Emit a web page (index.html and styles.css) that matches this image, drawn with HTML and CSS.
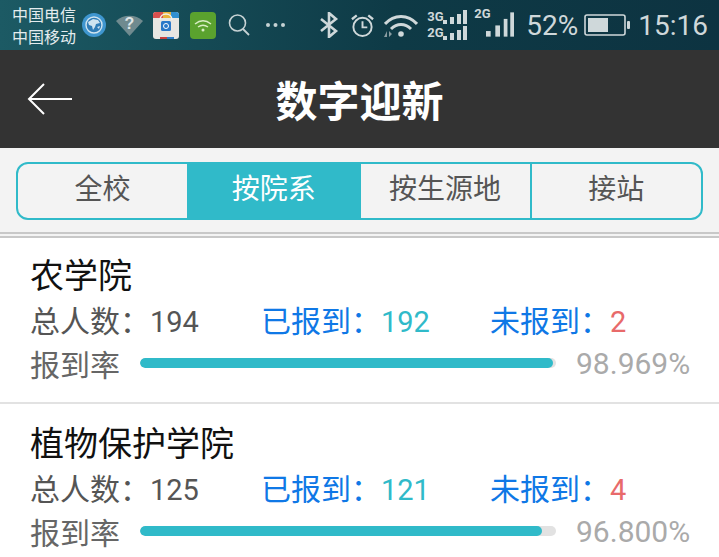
FILE: index.html
```html
<!DOCTYPE html>
<html lang="zh-CN">
<head>
  <meta charset="UTF-8" />
  <title>数字迎新</title>
  <link rel="stylesheet" href="styles.css">
</head>
<body>
  <div class="status-bar">
    <div class="carriers"><span>中国电信</span><span>中国移动</span></div>
    <div class="status-left">
      <svg class="ic-globe" width="24" height="24" viewBox="0 0 24 24"><circle cx="12" cy="12" r="12" fill="#3f96cf"/><circle cx="12" cy="12" r="8" fill="#2f7cb6" stroke="#cfe4f0" stroke-width="1.400"/><path d="M6 9l5-3 5 1 2 3-4 1-1 3-2 3-1-4-3-1zM15 14l3-1-1 3z" fill="#cfe4f0"/></svg>
      <svg class="ic-wifiq" width="27" height="22" viewBox="0 0 27 22"><path d="M0 7C7 0 20 0 27 7L13.500 22z" fill="#6f8a8f"/><text x="13.500" y="15" text-anchor="middle" class="ic-q">?</text></svg>
      <svg class="ic-store" width="26" height="27" viewBox="0 0 26 27"><rect width="26" height="27" rx="3" fill="#e6e6e2"/><path d="M0 3a3 3 0 0 1 3-3h7v6H0z" fill="#d8504f"/><path d="M10 0h8v6h-8z" fill="#e7b23c"/><path d="M18 0h5a3 3 0 0 1 3 3v3h-8z" fill="#2f8fd0"/><path d="M7 25h7v2H7z" fill="#c8403f"/><path d="M14 25h7v2h-7z" fill="#2f7fc8"/><path d="M7 8c0-8 12-8 12 0" fill="none" stroke="#f0f0ec" stroke-width="1.500"/><rect x="8" y="9" width="10" height="10" rx="1.500" fill="#2a78c8"/><circle cx="13" cy="14" r="2.500" fill="none" stroke="#fff"/></svg>
      <svg class="ic-wifi-app" width="26" height="27" viewBox="0 0 26 27"><rect width="26" height="27" rx="4" fill="#5aa22e"/><g fill="none" stroke="#d8eec4" stroke-width="1.500"><path d="M5 12c5-4 11-4 16 0"/><path d="M8 15c3.500-2.500 6.500-2.500 10 0"/></g><circle cx="13" cy="18" r="1.500" fill="#d8eec4"/></svg>
      <svg class="ic-search" width="22" height="22" viewBox="0 0 22 22"><circle cx="9.500" cy="9" r="8" fill="none" stroke="#c6d2d4" stroke-width="1.600"/><path d="M15 15l6 6" stroke="#c6d2d4" stroke-width="1.800"/></svg>
      <svg class="ic-more" width="21" height="6" viewBox="0 0 21 6"><g fill="#c6d2d4"><circle cx="3" cy="3" r="2"/><circle cx="10.500" cy="3" r="2"/><circle cx="18" cy="3" r="2"/></g></svg>
    </div>
    <div class="status-right">
      <svg class="ic-bt" width="20" height="26" viewBox="0 0 20 26"><path d="M2 7l15 12-7 6V1l7 6L2 19" fill="none" stroke="#cfd8da" stroke-width="2.600"/></svg>
      <svg class="ic-alarm" width="25" height="26" viewBox="0 0 26 26"><circle cx="13" cy="15" r="9.500" fill="none" stroke="#cfd8da" stroke-width="2"/><path d="M13 9v6.500h5" fill="none" stroke="#cfd8da" stroke-width="2"/><path d="M2 7l5-4M24 7l-5-4" stroke="#cfd8da" stroke-width="2.400"/></svg>
      <svg class="ic-wifi" width="34" height="25" viewBox="0 0 34 25"><g fill="none" stroke="#cfd8da" stroke-width="3"><path d="M1 11c9-10 23-10 32 0"/><path d="M7 16c6-6 14-6 20 0"/></g><circle cx="17" cy="21" r="2.800" fill="#cfd8da"/><path d="M3 18v6H0zM5 18l3 3-3 3z" fill="#8a9da2"/></svg>
      <div class="net-dual">
        <div class="net-row"><span>3G</span><svg width="24" height="14" viewBox="0 0 24 14"><g fill="#cfd8da"><rect x="0" y="10" width="4" height="4"/><rect x="7" y="7" width="4" height="7"/><rect x="14" y="4" width="4" height="10"/><rect x="20" y="0" width="4" height="14"/></g></svg></div>
        <div class="net-row"><span>2G</span><svg width="24" height="14" viewBox="0 0 24 14"><g fill="#cfd8da"><rect x="0" y="10" width="4" height="4"/><rect x="7" y="7" width="4" height="7"/><rect x="14" y="4" width="4" height="10"/><rect x="20" y="0" width="4" height="14"/></g></svg></div>
      </div>
      <div class="net-single"><span>2G</span><svg class="bars" width="28" height="25" viewBox="0 0 30 26"><g fill="#cfd8da"><rect x="0" y="20" width="5" height="6"/><rect x="10" y="14" width="5" height="12"/><rect x="19" y="7" width="4" height="19"/><rect x="26" y="0" width="4" height="26"/></g></svg></div>
      <span class="batt-pct">52%</span>
      <svg class="ic-batt" width="46" height="22" viewBox="0 0 46 22"><rect x="1" y="1" width="40" height="20" rx="2" fill="none" stroke="#cfd8da" stroke-width="1.600"/><rect x="4" y="4" width="20" height="14" fill="#cfd8da"/><rect x="43" y="7" width="3" height="8" rx="1" fill="#cfd8da"/></svg>
      <span class="clock">15:16</span>
    </div>
  </div>

  <header class="app-bar">
    <svg class="back" width="46" height="34" viewBox="0 0 46 34"><path d="M45 17H2M17 2L2 17l15 15" fill="none" stroke="#fff" stroke-width="2"/></svg>
    <h1>数字迎新</h1>
  </header>

  <div class="tab-wrap">
    <div class="tabs">
      <div class="tab">全校</div>
      <div class="tab active">按院系</div>
      <div class="tab">按生源地</div>
      <div class="tab">接站</div>
    </div>
  </div>
  <div class="double-line"></div>

  <div class="list">
    <section class="item">
      <h2>农学院</h2>
      <div class="stats">
        <div class="stat total"><span class="label">总人数：</span><span class="num">194</span></div>
        <div class="stat done"><span class="label">已报到：</span><span class="num">192</span></div>
        <div class="stat miss"><span class="label">未报到：</span><span class="num">2</span></div>
      </div>
      <div class="rate">
        <span class="rate-label">报到率</span>
        <div class="track"><div class="fill" style="width: 99.2%"></div></div>
        <span class="pct">98.969%</span>
      </div>
    </section>
    <section class="item">
      <h2>植物保护学院</h2>
      <div class="stats">
        <div class="stat total"><span class="label">总人数：</span><span class="num">125</span></div>
        <div class="stat done"><span class="label">已报到：</span><span class="num">121</span></div>
        <div class="stat miss"><span class="label">未报到：</span><span class="num">4</span></div>
      </div>
      <div class="rate">
        <span class="rate-label">报到率</span>
        <div class="track"><div class="fill" style="width: 96.6%"></div></div>
        <span class="pct">96.800%</span>
      </div>
    </section>
  </div>
</body>
</html>
```

FILE: styles.css
```css
* { box-sizing: border-box; }

html, body {
  height: 100%;
  overflow: hidden;
}

body {
  margin: 0;
  background: #fff;
  font-family: "Noto Sans CJK SC", Roboto, sans-serif;
  color: #555;
}

/* status bar */
.status-bar {
  display: flex;
  align-items: center;
  height: 50px;
  padding: 0 11px 0 12px;
  background: linear-gradient(90deg, #1c5a64, #0e3a46 55%, #0d3341);
  color: #cfd8da;
}

.carriers {
  display: flex;
  flex-direction: column;
  width: 70px;
  font-size: 16px;
  line-height: 22px;
  color: #e4ecee;
  white-space: nowrap;
}

.status-left {
  display: flex;
  align-items: center;
  width: 222px;
}

.ic-wifiq { margin-left: 10px; }
.ic-store { margin-left: 10px; }
.ic-wifi-app { margin-left: 11px; }
.ic-search { margin-left: 12px; }
.ic-more { margin-left: 15px; }

.ic-q {
  font-family: "Liberation Sans", sans-serif;
  font-size: 16px;
  font-weight: bold;
  fill: #dfe6e8;
}

.status-right {
  display: flex;
  align-items: center;
  flex: 1;
}

.ic-bt { margin-left: 17px; }
.ic-alarm { margin-left: 11px; }
.ic-wifi { margin-left: 9px; }

.net-dual {
  display: flex;
  flex-direction: column;
  width: 40px;
  margin-left: 9px;
  font-family: Roboto, sans-serif;
  font-size: 13px;
  font-weight: 700;
  line-height: 14px;
}

.net-row {
  display: flex;
  align-items: center;
  height: 16px;
}

.net-row span { width: 16px; }

.net-single {
  position: relative;
  width: 40px;
  height: 30px;
  margin: 0 0 6px 7px;
  font-family: Roboto, sans-serif;
  font-size: 13px;
  font-weight: 700;
}

.net-single span {
  position: absolute;
  left: 0;
  top: 0;
  line-height: 14px;
}

.net-single .bars {
  position: absolute;
  right: 0;
  bottom: 0;
}

.batt-pct, .clock {
  font-family: Roboto, sans-serif;
  font-size: 28px;
}

.batt-pct { margin-left: 12px; }
.ic-batt { margin-left: 6px; }
.clock { margin-left: 8px; }

/* title bar */
.app-bar {
  position: relative;
  display: flex;
  align-items: center;
  justify-content: center;
  height: 98px;
  background: #333;
}

.app-bar h1 {
  margin: 0;
  color: #fff;
  font-size: 42px;
  font-weight: 700;
  line-height: 1;
}

.back {
  position: absolute;
  left: 27px;
  top: 32px;
}

/* tabs */
.tab-wrap {
  height: 84px;
  padding: 14px 16px 0;
  background: #f3f3f3;
}

.tabs {
  display: flex;
  height: 58px;
  border: 2px solid #30bac9;
  border-radius: 12px;
  overflow: hidden;
}

.tab {
  flex: 1;
  display: flex;
  align-items: center;
  justify-content: center;
  padding-bottom: 9px;
  font-size: 28px;
  color: #555;
  border-left: 2px solid #30bac9;
}

.tab:first-child { border-left: 0; }

.tab.active {
  background: #30bac9;
  color: #fff;
}

.double-line {
  height: 6px;
  background: #f3f3f3;
  border-top: 2px solid #c8c8c8;
  border-bottom: 2px solid #c8c8c8;
}

/* list */
.item {
  height: 166px;
  padding: 14px 30px 0;
  border-bottom: 2px solid #e2e2e2;
}

.item + .item { padding-top: 16px; }

.item h2 {
  margin: 0;
  color: #111;
  font-size: 34px;
  font-weight: 400;
  line-height: 44px;
}

.stats {
  display: flex;
  height: 40px;
  margin-top: 3px;
  align-items: center;
  font-size: 30px;
}

.stat {
  display: flex;
  align-items: center;
}

.stat.total { width: 231px; }
.stat.done { width: 229px; }
.label { white-space: nowrap; }
.done .label, .miss .label { color: #0f78e6; }

.num {
  padding-top: 5px;
  font-family: Roboto, sans-serif;
  font-size: 29px;
}

.done .num { color: #30bac9; }
.miss .num { color: #e86a6a; }

.rate {
  display: flex;
  align-items: center;
  height: 44px;
  margin-top: 2px;
}

.rate-label {
  flex: none;
  width: 110px;
  font-size: 30px;
  color: #666;
  white-space: nowrap;
}

.track {
  flex: none;
  width: 416px;
  height: 10px;
  border-radius: 5px;
  background: #e2e2e2;
  overflow: hidden;
}

.fill {
  height: 100%;
  border-radius: 5px;
  background: #30bac9;
}

.pct {
  margin-left: 20px;
  font-family: Roboto, sans-serif;
  font-size: 30px;
  color: #aaa;
  white-space: nowrap;
}
```
